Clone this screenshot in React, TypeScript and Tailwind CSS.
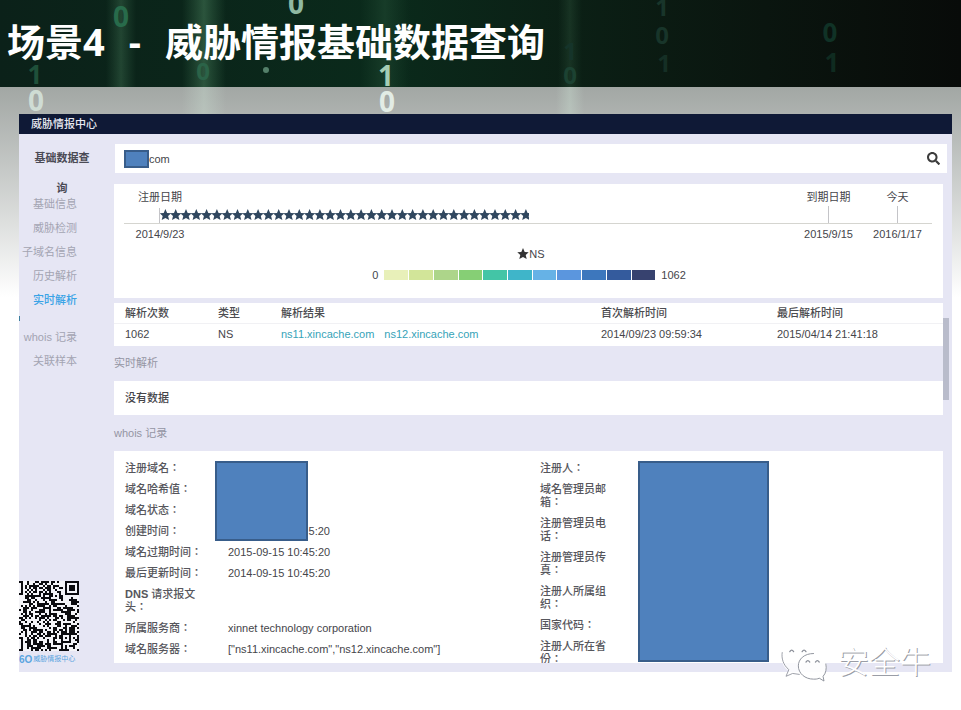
import React from "react";
import { FaSearch } from "react-icons/fa";

const STAR = "M0 -6 L1.7 -2 L5.7 -1.8 L2.7 0.9 L3.7 5 L0 2.9 L-3.7 5 L-2.7 0.9 L-5.7 -1.8 L-1.7 -2 Z";

const NAV_TOP = ["基础信息", "威胁检测", "子域名信息", "历史解析", "实时解析"];
const NAV_BOTTOM = ["whois 记录", "关联样本"];

const LEGEND = [
  "bg-[#e8f0b9]",
  "bg-[#d2e599]",
  "bg-[#add58a]",
  "bg-[#86cf75]",
  "bg-[#43c5a6]",
  "bg-[#3fb5c9]",
  "bg-[#66b2e6]",
  "bg-[#5b96de]",
  "bg-[#3d77bd]",
  "bg-[#345b9d]",
  "bg-[#37426f]",
];

const OWNER_LABELS = [
  "注册人：",
  "域名管理员邮箱：",
  "注册管理员电话：",
  "注册管理员传真：",
  "注册人所属组织：",
  "国家代码：",
  "注册人所在省份：",
];

/* Falling digits behind the slide title: x, baseline, glyph, colour, size */
const RAIN: [number, number, string, string, number][] = [
  [121, 27, "0", "#286b4b", 28],
  [296, 14, "0", "#8fb9a2", 28],
  [35, 84, "1", "#1f503a", 26],
  [36, 111, "0", "#cfdcd4", 28],
  [203, 80, "0", "#2b6348", 24],
  [386, 86, "1", "#a5cdb5", 28],
  [387, 112, "0", "#e2ece5", 28],
  [570, 60, "1", "#15342a", 24],
  [570, 84, "0", "#1c4232", 24],
  [662, 16, "1", "#18352a", 24],
  [662, 44, "0", "#18352a", 24],
  [664, 72, "1", "#152f25", 24],
  [830, 42, "0", "#103226", 26],
  [832, 72, "1", "#0f2b20", 26],
];

function DigitalRain() {
  return (
    <svg className="pointer-events-none absolute left-0 top-0 h-[114px] w-[961px]" viewBox="0 0 961 114" aria-hidden="true">
      <defs>
        <linearGradient id="beam" x1="0" x2="1">
          <stop offset="0" stopColor="#4d8c62" stopOpacity="0" />
          <stop offset="0.5" stopColor="#5c9a70" stopOpacity="0.4" />
          <stop offset="1" stopColor="#4d8c62" stopOpacity="0" />
        </linearGradient>
        <linearGradient id="glow" x1="0" x2="1">
          <stop offset="0" stopColor="#c8dccf" stopOpacity="0" />
          <stop offset="0.5" stopColor="#c8dccf" stopOpacity="0.4" />
          <stop offset="1" stopColor="#c8dccf" stopOpacity="0" />
        </linearGradient>
      </defs>
      <rect x="106" y="0" width="30" height="87" fill="url(#beam)" opacity="0.7" />
      <rect x="182" y="0" width="44" height="87" fill="url(#beam)" />
      <rect x="360" y="0" width="50" height="87" fill="url(#beam)" opacity="0.4" />
      <rect x="558" y="0" width="24" height="87" fill="url(#beam)" opacity="0.4" />
      <rect x="182" y="87" width="44" height="27" fill="url(#glow)" />
      <rect x="556" y="87" width="28" height="27" fill="url(#glow)" />
      <circle cx="266" cy="70" r="3" fill="#54806a" />
      {RAIN.map(([x, y, d, c, s]) => (
        <text key={`${x}-${y}`} x={x} y={y} fill={c} fontSize={s} fontWeight="700" textAnchor="middle" className="font-['Open_Sans',sans-serif]">
          {d}
        </text>
      ))}
    </svg>
  );
}

function Timeline() {
  return (
    <div className="pl-[10px] pr-[11px] pt-[5px]">
      <div className="flex h-[16px] items-center text-center">
        <span className="w-[72px]">注册日期</span>
        <span className="flex-1" />
        <span className="w-[69px]">到期日期</span>
        <span className="w-[69px]">今天</span>
      </div>
      <div className="flex h-[19px] items-end border-b border-[#d5d5d0]">
        <span className="w-[35px]" />
        <span className="h-[15px] w-px bg-[#c4c4c8]" />
        <svg className="h-[18px] w-[369px]" viewBox="0 0 369 18" aria-hidden="true">
          {Array.from({ length: 36 }, (_, i) => (
            <path key={i} d={STAR} fill="#30475f" transform={`translate(${5.4 + i * 10.3} 10)`} />
          ))}
        </svg>
        <span className="flex-1" />
        <span className="flex w-[69px] justify-center">
          <span className="h-[17px] w-px bg-[#c4c4c8]" />
        </span>
        <span className="flex w-[69px] justify-center">
          <span className="h-[17px] w-px bg-[#c4c4c8]" />
        </span>
      </div>
      <div className="flex h-[20px] items-center text-center">
        <span className="w-[72px]">2014/9/23</span>
        <span className="flex-1" />
        <span className="w-[69px]">2015/9/15</span>
        <span className="w-[69px]">2016/1/17</span>
      </div>
      <div className="flex h-[20px] items-center justify-center pl-[6px]">
        <svg className="h-[12px] w-[12px]" viewBox="-6 -6 12 12" aria-hidden="true">
          <path d={STAR} fill="#333" />
        </svg>
        NS
      </div>
      <div className="flex h-[22px] items-center justify-center gap-[6px] pl-[2px]">
        <span>0</span>
        <span className="flex h-[10px] w-[271px] gap-px">
          {LEGEND.map((c) => (
            <span key={c} className={`flex-1 ${c}`} />
          ))}
        </span>
        <span>1062</span>
      </div>
    </div>
  );
}

function ResolutionTable() {
  return (
    <table className="w-full table-fixed border-collapse bg-white text-left leading-[20px]">
      <thead>
        <tr className="border-b border-[#f1f1f4]">
          <th className="w-[104px] pl-[11px] font-medium text-[#4c4c50]">解析次数</th>
          <th className="w-[63px] font-medium text-[#4c4c50]">类型</th>
          <th className="font-medium text-[#4c4c50]">解析结果</th>
          <th className="w-[176px] font-medium text-[#4c4c50]">首次解析时间</th>
          <th className="w-[166px] font-medium text-[#4c4c50]">最后解析时间</th>
        </tr>
      </thead>
      <tbody>
        <tr>
          <td className="pb-[2px] pl-[11px]">1062</td>
          <td className="pb-[2px]">NS</td>
          <td className="pb-[2px]">
            <span className="flex gap-[10px] text-[#36a3b8]">
              <a href="#ns11">ns11.xincache.com</a>
              <a href="#ns12">ns12.xincache.com</a>
            </span>
          </td>
          <td className="pb-[2px]">2014/09/23 09:59:34</td>
          <td className="pb-[2px]">2015/04/14 21:41:18</td>
        </tr>
      </tbody>
    </table>
  );
}

function Field({ label, children }: { label: React.ReactNode; children?: React.ReactNode }) {
  return (
    <div className="flex">
      <dt className="w-[80px] shrink-0 font-['Liberation_Sans','Noto_Sans_CJK_JP',sans-serif] font-medium text-[#56565c]">{label}</dt>
      <dd className="ml-[23px]">{children}</dd>
    </div>
  );
}

function WhoisCard() {
  return (
    <div className="relative flex h-[212px] overflow-hidden bg-white pl-[11px] pt-[11px] leading-[13px]">
      <dl className="flex flex-1 flex-col gap-[8px]">
        <Field label="注册域名：" />
        <Field label="域名哈希值：" />
        <Field label="域名状态：" />
        <Field label="创建时间：">
          <span className="block w-[102px] text-right">5:20</span>
        </Field>
        <Field label="域名过期时间：">2015-09-15 10:45:20</Field>
        <Field label="最后更新时间：">2014-09-15 10:45:20</Field>
        <Field
          label={
            <>
              <b>DNS</b> 请求报文头：
            </>
          }
        />
        <Field label="所属服务商：">xinnet technology corporation</Field>
        <Field label="域名服务器：">["ns11.xincache.com","ns12.xincache.com"]</Field>
      </dl>
      <div className="flex flex-1 items-start">
        <dl className="flex w-[86px] flex-col gap-[8px] pl-[6px] font-['Liberation_Sans','Noto_Sans_CJK_JP',sans-serif]">
          {OWNER_LABELS.map((l) => (
            <dt key={l} className="font-medium text-[#56565c]">
              {l}
            </dt>
          ))}
        </dl>
        <div className="-mt-px ml-[18px] h-[201px] w-[131px] border-2 border-[#385d8a] bg-[#4f81bd]" />
      </div>
      <div className="absolute left-[101px] top-[10px] h-[80px] w-[93px] border-2 border-[#385d8a] bg-[#4f81bd]" />
    </div>
  );
}

function isDark(x: number, y: number) {
  for (const [fx, fy] of [[0, 0], [28, 0], [0, 28]]) {
    const dx = x - fx;
    const dy = y - fy;
    if (dx >= -1 && dx <= 7 && dy >= -1 && dy <= 7) {
      const r = Math.max(Math.abs(dx - 3), Math.abs(dy - 3));
      return r === 3 || r <= 1;
    }
  }
  const a = Math.max(Math.abs(x - 28), Math.abs(y - 28));
  if (a <= 2) return a !== 1;
  let h = (x * 374761393 + y * 668265263) | 0;
  h = Math.imul(h ^ (h >>> 13), 1274126177);
  return ((h ^ (h >>> 16)) & 255) < 136;
}

function QrCode() {
  const cells: React.ReactNode[] = [];
  for (let y = 0; y < 35; y++)
    for (let x = 5; x < 35; x++)
      if (isDark(x, y)) cells.push(<rect key={`${x}-${y}`} x={x} y={y} width="1" height="1" />);
  return (
    <svg className="h-[70px] w-[60px] bg-[#f4f4f8]" viewBox="5 0 30 35" fill="#0c0c10" shapeRendering="crispEdges" role="img">
      {cells}
    </svg>
  );
}

function Sidebar() {
  return (
    <aside className="flex w-[95px] shrink-0 flex-col">
      <h2 className="ml-[15px] mt-[9px] w-[56px] text-center font-bold leading-[30px] text-[#4b4b55]">基础数据查询</h2>
      <nav className="-mt-[11px] mr-[37px] text-right leading-[24px] text-[#a3a4b2]">
        <ul>
          {NAV_TOP.map((n) => (
            <li key={n} className="whitespace-nowrap">
              <a href={`#${n}`} className={n === "实时解析" ? "font-medium text-[#39a3e6]" : ""}>
                {n}
              </a>
            </li>
          ))}
        </ul>
        <div className="flex h-[13px] items-center">
          <span className="h-[5px] w-px bg-[#3c7fa0]" />
        </div>
        <ul>
          {NAV_BOTTOM.map((n) => (
            <li key={n} className="whitespace-nowrap">
              <a href={`#${n}`}>{n}</a>
            </li>
          ))}
        </ul>
      </nav>
      <div className="mb-[6px] mt-auto">
        <QrCode />
        <div className="mt-[2px] flex h-[13px] items-center gap-px whitespace-nowrap text-[#5aa5e0]">
          <b className="text-[10px]">6O</b>
          <span className="text-[7px]">威胁情报中心</span>
        </div>
      </div>
    </aside>
  );
}

function Watermark() {
  return (
    <div className="absolute bottom-[28px] right-[30px] flex items-start gap-[8px]">
      <svg className="h-[38px] w-[50px]" viewBox="0 0 50 40" fill="none" strokeLinecap="round" aria-hidden="true">
        <path d="M20 2C9 2 1 9 1 17c0 5 3 9 7 11l-2 5 7-3c2 1 4 1 7 1C19 19 26 10 38 10 36 5 29 2 20 2Z" fill="#fff" fillOpacity="0.8" />
        <path d="M1 9c-1 6 1 13 7 18l-3 7 7-3 7 1" stroke="#999ca5" strokeWidth="1" />
        <path d="M33 10C24 10 18 16 18 23c0 8 7 14 16 14 2 0 4 0 6-1l5 3-1-5c3-3 4-7 4-11-1-7-7-13-15-13Z" fill="#fff" fillOpacity="0.9" />
        <path d="M34 10C24 10 18 16 18 23c0 8 7 14 16 14 2 0 4 0 6-1l5 3-1-5c3-3 4-8 3-13" stroke="#8c909a" strokeWidth="1" />
        <path d="M9 8q2-3 4 0M22 8q2-3 4 0M26 19q2-3 4 0M36 19q2-3 4 0" stroke="#8c909a" strokeWidth="1.4" />
      </svg>
      <span className="font-['Noto_Sans_CJK_SC',sans-serif] text-[31px] font-light leading-[32px] text-white [text-shadow:1px_1px_0_#9a9da6]">安全牛</span>
    </div>
  );
}

export default function App() {
  return (
    <div className="relative min-h-screen bg-white font-['Liberation_Sans','Noto_Sans_CJK_SC',sans-serif] text-[11px] text-[#45454a]">
      <header className="flex h-[87px] items-center bg-linear-to-r from-[#0b2119] via-[#0a2a1b] via-40% to-[#080b09]">
        <h1 className="relative z-10 flex gap-[24px] whitespace-nowrap pb-[5px] pl-[7px] font-['Open_Sans','Noto_Sans_CJK_SC',sans-serif] text-[38px] font-bold leading-[48px] text-white">
          <span>场景4</span>
          <span>-</span>
          <span>威胁情报基础数据查询</span>
        </h1>
      </header>
      <main className="bg-linear-to-b from-[#a2a7a4] to-white to-[210px] pb-[38px] pl-[19px] pr-[9px] pt-[27px]">
        <section className="bg-[#e6e6f4]">
          <div className="flex h-[20px] items-center bg-[#0f1936] pl-[12px] font-medium text-[#e8eaf2]">威胁情报中心</div>
          <div className="flex">
            <Sidebar />
            <div className="min-w-0 flex-1 pb-[9px] pt-[10px]">
              <form className="ml-px mr-[5px] flex h-[29px] items-center bg-white pl-[9px] pr-[7px]" onSubmit={(e) => e.preventDefault()}>
                <span className="h-[18px] w-[25px] border-2 border-[#385d8a] bg-[#4f81bd]" />
                <input aria-label="域名" defaultValue="com" className="h-full min-w-0 flex-1 bg-transparent outline-none" />
                <button type="submit" aria-label="查询">
                  <FaSearch className="size-[13px] text-[#3c3c3c]" />
                </button>
              </form>
              <div className="mt-[11px] flex">
                <div className="min-w-0 flex-1">
                  <div className="mb-[5px] h-[114px] bg-white">
                    <Timeline />
                  </div>
                  <ResolutionTable />
                  <h3 className="leading-[35px] text-[#9495a3]">实时解析</h3>
                  <p className="bg-white pl-[11px] font-medium leading-[34px]">没有数据</p>
                  <h3 className="leading-[36px] text-[#9495a3]">whois 记录</h3>
                  <WhoisCard />
                </div>
                <div className="mr-[3px] mt-[134px] h-[82px] w-[6px] bg-[#b9bccb]" />
              </div>
            </div>
          </div>
        </section>
      </main>
      <DigitalRain />
      <Watermark />
    </div>
  );
}
